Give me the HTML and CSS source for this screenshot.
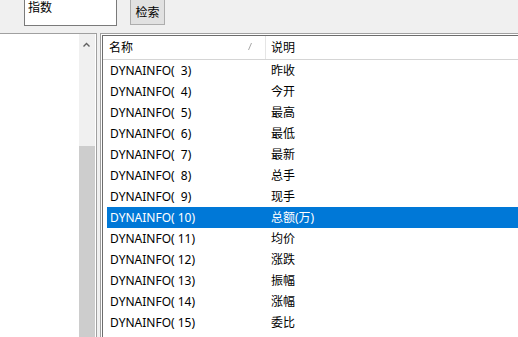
FILE: index.html
```html
<!DOCTYPE html>
<html lang="zh">
<head>
  <meta charset="UTF-8">
  <title>指标检索</title>
  <link rel="stylesheet" href="styles.css">
</head>
<body>

  <div class="top">
    <div class="search-box">指数</div>
    <div class="search-btn">检索</div>
  </div>

  <div class="main">
    <div class="tree">
      <div class="tree-body"></div>
      <div class="vscroll">
        <div class="vs-arrow">
          <svg width="16" height="17" viewBox="0 0 16 17"><path d="M4.5 12.5 L7.5 9.5 L10.5 12.5" fill="none" stroke="#606060" stroke-width="1.4"/></svg>
        </div>
        <div class="vs-track"></div>
        <div class="vs-thumb"></div>
      </div>
    </div>

    <div class="list">
      <div class="list-inner">
        <div class="list-head">
          <div class="hcol hcol-name">名称
            <svg class="sort" width="6" height="9" viewBox="0 0 6 9"><path d="M4.5 1 L1.5 8" stroke="#a8a8a8" stroke-width="1"/></svg>
          </div>
          <div class="hcol hcol-desc">说明</div>
        </div>

        <div class="row"><span class="c-name">DYNAINFO(  3)</span><span class="c-desc">昨收</span></div>
        <div class="row"><span class="c-name">DYNAINFO(  4)</span><span class="c-desc">今开</span></div>
        <div class="row"><span class="c-name">DYNAINFO(  5)</span><span class="c-desc">最高</span></div>
        <div class="row"><span class="c-name">DYNAINFO(  6)</span><span class="c-desc">最低</span></div>
        <div class="row"><span class="c-name">DYNAINFO(  7)</span><span class="c-desc">最新</span></div>
        <div class="row"><span class="c-name">DYNAINFO(  8)</span><span class="c-desc">总手</span></div>
        <div class="row"><span class="c-name">DYNAINFO(  9)</span><span class="c-desc">现手</span></div>
        <div class="row selected"><span class="c-name">DYNAINFO( 10)</span><span class="c-desc">总额(万)</span></div>
        <div class="row"><span class="c-name">DYNAINFO( 11)</span><span class="c-desc">均价</span></div>
        <div class="row"><span class="c-name">DYNAINFO( 12)</span><span class="c-desc">涨跌</span></div>
        <div class="row"><span class="c-name">DYNAINFO( 13)</span><span class="c-desc">振幅</span></div>
        <div class="row"><span class="c-name">DYNAINFO( 14)</span><span class="c-desc">涨幅</span></div>
        <div class="row"><span class="c-name">DYNAINFO( 15)</span><span class="c-desc">委比</span></div>
      </div>
    </div>
  </div>

</body>
</html>
```

FILE: styles.css
```css
html, body {
  margin: 0;
  height: 337px;
  overflow: hidden;
}

body {
  font-family: "Noto Sans", "Noto Sans CJK SC", sans-serif;
  font-size: 12px;
  color: #000;
  background: #f0f0f0;
}

.top {
  height: 33px;
  display: flex;
  align-items: flex-start;
}

.search-box {
  margin: -3px 0 0 24px;
  width: 93px;
  height: 29px;
  padding: 2px 0 0 3px;
  box-sizing: border-box;
  border: 1px solid #7a7a7a;
  background: #fff;
  line-height: 16px;
}

.search-btn {
  margin: -2px 0 0 13px;
  width: 35px;
  height: 27px;
  box-sizing: border-box;
  border: 1px solid #adadad;
  background: #e1e1e1;
  text-align: center;
  line-height: 27px;
}

.main {
  display: flex;
  height: 304px;
}

.tree {
  width: 96px;
  border-top: 1px solid #a0a0a0;
  border-right: 1px solid #a0a0a0;
  background: #fff;
  display: flex;
}

.tree-body {
  width: 79px;
}

.vscroll {
  width: 16px;
  display: flex;
  flex-direction: column;
  background: #f0f0f0;
}

.vs-arrow {
  height: 17px;
}

.vs-arrow svg {
  display: block;
}

.vs-track {
  height: 95px;
}

.vs-thumb {
  flex: 1;
  background: #cdcdcd;
}

.list {
  flex: 1;
  margin-left: 3px;
  border-top: 1px solid #a0a0a0;
  border-left: 1px solid #a0a0a0;
  padding: 1px 0 0 1px;
  background: #fff;
  overflow: hidden;
}

.list-inner {
  height: 100%;
  border-top: 1px solid #6d6d6d;
  border-left: 1px solid #6d6d6d;
  background: #fff;
}

.list-head {
  display: flex;
  height: 23px;
  border-bottom: 1px solid #d5d5d5;
  line-height: 23px;
}

.hcol {
  position: relative;
  box-sizing: border-box;
}

.hcol-name {
  width: 163px;
  padding-left: 6px;
  border-right: 1px solid #e5e5e5;
}

.hcol-desc {
  padding-left: 5px;
}

.sort {
  position: absolute;
  left: 144px;
  top: 6px;
}

.row {
  display: flex;
  height: 21px;
  line-height: 21px;
  margin-left: 4px;
  white-space: pre;
}

.c-name {
  width: 158px;
  padding-left: 3px;
  box-sizing: border-box;
}

.c-desc {
  padding-left: 6px;
}

.row.selected {
  background: #0078d7;
  color: #fff;
}
```
